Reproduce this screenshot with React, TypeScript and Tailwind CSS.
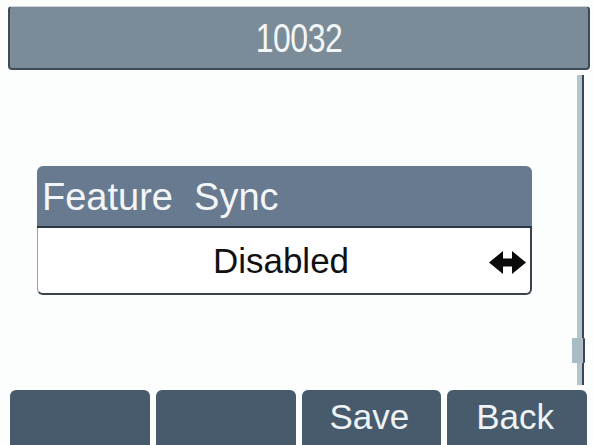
import React from "react";

const sans = "font-['Liberation_Sans',Arial,sans-serif]";

function ArrowLR() {
  return (
    <svg width="37" height="23" viewBox="0 0 37 23">
      <path d="M0 11.5 L14 0 L14 7.5 L23 7.5 L23 0 L37 11.5 L23 23 L23 15.5 L14 15.5 L14 23 Z" fill="#0a0a0a" />
    </svg>
  );
}

function SoftKey({ label }: { label?: string }) {
  return (
    <div className="flex-1 h-full rounded-t-[6px] bg-[#475b6c] flex items-start justify-center pt-[6px] pr-[4px]">
      {label && <span className={`${sans} text-[35px] leading-[42px] text-[#eef3f5]`}>{label}</span>}
    </div>
  );
}

export default function App() {
  return (
    <div className="w-[593px] h-[445px] bg-[#fcfdfd] flex flex-col overflow-hidden">
      {/* title bar */}
      <div className="mt-[6px] ml-[8px] mr-[3px] h-[64px] rounded-[4px] bg-[#7b8c98] border-l-2 border-b-2 border-r-2 border-[#3e4b57] border-t border-t-[#c9d3d8] flex items-center justify-center">
        <span className={`${sans} text-[32px] leading-none text-[#f2f6f7] scale-y-[1.27] tracking-[-0.5px]`}>10032</span>
      </div>

      <div className="flex h-[320px]">
        {/* setting card */}
        <div className="ml-[37px] mt-[96px] w-[495px] h-[129px] flex flex-col">
          <div className="h-[62px] rounded-t-[6px] bg-[#687a8f] border-b-2 border-[#2c3640] flex items-center pl-[5px] pt-[2px]">
            <span className={`${sans} text-[38px] leading-none text-[#f3f6f8] whitespace-pre`}>Feature  Sync</span>
          </div>
          <div className="h-[67px] bg-white rounded-b-[6px] border-l border-[#9aa2a8] border-r-2 border-r-[#3a444d] border-b-2 border-b-[#3a444d] flex items-center relative">
            <span className={`${sans} flex-1 text-center text-[35px] leading-none text-[#111] pr-[6px]`}>Disabled</span>
            <div className="absolute right-[4px] top-[23px]">
              <ArrowLR />
            </div>
          </div>
        </div>

        {/* scrollbar */}
        <div className="ml-[40px] mt-[5px] w-[13px] h-[310px] relative">
          <div className="absolute left-[5px] top-0 w-[5px] h-full bg-[#b3c4cc]" />
          <div className="absolute left-[10px] top-0 w-[2px] h-full bg-[#3b4650]" />
          <div className="absolute left-0 top-[263px] w-[13px] h-[25px] bg-[#a9bcc5] border-r-2 border-[#3b4650] rounded-[1px]" />
        </div>
      </div>

      {/* soft keys */}
      <div className="flex gap-[6px] pl-[10px] pr-[6px] h-[55px]">
        <SoftKey />
        <SoftKey />
        <SoftKey label="Save" />
        <SoftKey label="Back" />
      </div>
    </div>
  );
}
